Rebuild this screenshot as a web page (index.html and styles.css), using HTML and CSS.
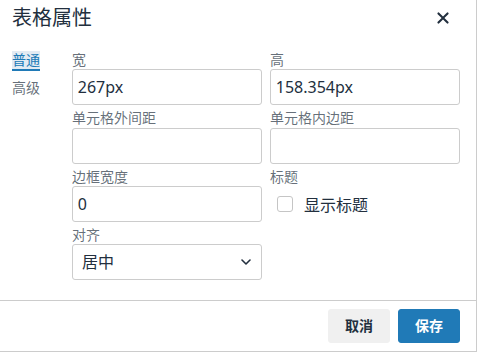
FILE: index.html
```html
<!DOCTYPE html>
<html lang="zh">
<head>
<meta charset="utf-8">
<link rel="stylesheet" href="styles.css">
</head>
<body>
<div class="dialog">
  <div class="header">
    <div class="title">表格属性</div>
    <button class="close" aria-label="Close">
      <svg width="24" height="24" viewBox="0 0 24 24"><path d="M17.3 8.2L13.4 12l3.9 3.8a1 1 0 0 1-1.5 1.5L12 13.4l-3.8 3.9a1 1 0 0 1-1.5-1.5l3.9-3.8-3.9-3.8a1 1 0 0 1 1.5-1.5l3.8 3.9 3.8-3.9a1 1 0 0 1 1.5 1.5z" fill="#222f3e"/></svg>
    </button>
  </div>
  <div class="body">
    <div class="tabs">
      <div class="tab active">普通</div>
      <div class="tab">高级</div>
    </div>
    <div class="form">
      <div class="group">
        <div class="label">宽</div>
        <div class="input">267px</div>
      </div>
      <div class="group">
        <div class="label">高</div>
        <div class="input">158.354px</div>
      </div>
      <div class="group">
        <div class="label">单元格外间距</div>
        <div class="input"></div>
      </div>
      <div class="group">
        <div class="label">单元格内边距</div>
        <div class="input"></div>
      </div>
      <div class="group">
        <div class="label">边框宽度</div>
        <div class="input">0</div>
      </div>
      <div class="group">
        <div class="label">标题</div>
        <div class="check-row">
          <span class="checkbox"></span>
          <span class="check-label">显示标题</span>
        </div>
      </div>
      <div class="group">
        <div class="label">对齐</div>
        <div class="select">
          <span>居中</span>
          <svg width="10" height="6" viewBox="0 0 10 6"><path d="M1 1l4 4 4-4" fill="none" stroke="#222f3e" stroke-width="1.6" stroke-linecap="round" stroke-linejoin="round"/></svg>
        </div>
      </div>
    </div>
  </div>
  <div class="footer">
    <button class="btn secondary">取消</button>
    <button class="btn primary">保存</button>
  </div>
</div>
</body>
</html>
```

FILE: styles.css
```css
* { box-sizing: border-box; }
html, body { margin: 0; padding: 0; background: #fff; }
body {
  font-family: "Noto Sans", "Noto Sans CJK SC", sans-serif;
  color: #222f3e;
}
.dialog {
  width: 477px;
  height: 352px;
  border-right: 1px solid #ccc;
  border-bottom: 1px solid #ccc;
  display: flex;
  flex-direction: column;
}
.header {
  display: flex;
  justify-content: space-between;
  align-items: flex-start;
  padding: 4px 21px 0 12px;
  height: 35px;
}
.title {
  font-size: 20px;
  line-height: 28px;
}
.close {
  border: 0;
  background: none;
  padding: 0;
  margin-top: 2px;
  width: 24px;
  height: 24px;
  display: flex;
}
.body {
  display: flex;
  padding: 16px 16px 0 12px;
  flex: 1;
}
.tabs {
  width: 60px;
  display: flex;
  flex-direction: column;
  align-items: flex-start;
  gap: 8px;
}
.tab {
  font-size: 14px;
  line-height: 18px;
  color: rgba(34, 47, 62, 0.7);
  border-bottom: 2px solid transparent;
}
.tab.active {
  color: #207ab7;
  border-bottom-color: #207ab7;
  background: #e3ebf3;
}
.form {
  display: grid;
  grid-template-columns: 190px 190px;
  column-gap: 8px;
  align-content: start;
}
.group {
  display: flex;
  flex-direction: column;
  margin-bottom: 4px;
}
.label {
  font-size: 14px;
  line-height: 18.3px;
  color: rgba(34, 47, 62, 0.7);
}
.input {
  height: 36px;
  border: 1px solid #ccc;
  border-radius: 3px;
  padding: 5px 4.75px;
  font-size: 16px;
  line-height: 24px;
  color: #222f3e;
}
.check-row {
  height: 36px;
  display: flex;
  align-items: center;
  padding-left: 7px;
}
.checkbox {
  width: 16px;
  height: 16px;
  border: 1px solid #c5c5c5;
  border-radius: 3px;
  margin-top: 1px;
}
.check-label {
  font-size: 16px;
  margin-left: 11px;
  color: #222f3e;
}
.select {
  height: 36px;
  border: 1px solid #ccc;
  border-radius: 3px;
  padding: 5px 10px 5px 9px;
  font-size: 16px;
  line-height: 24px;
  display: flex;
  justify-content: space-between;
  align-items: center;
}
.footer {
  border-top: 1px solid #ccc;
  display: flex;
  justify-content: flex-end;
  gap: 8px;
  padding: 8px 16px;
  height: 51px;
}
.btn {
  font-family: inherit;
  font-size: 14px;
  font-weight: bold;
  line-height: 24px;
  padding: 4px 16px;
  border-radius: 3px;
  height: 34px;
  width: 62px;
}
.btn.secondary {
  background: #f0f0f0;
  border: 1px solid #f0f0f0;
  color: #222f3e;
}
.btn.primary {
  background: #207ab7;
  border: 1px solid #207ab7;
  color: #fff;
}
```
